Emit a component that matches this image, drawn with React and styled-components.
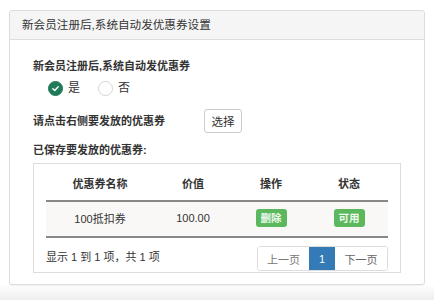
import React, { useState } from 'react';
import styled, { createGlobalStyle } from 'styled-components';

const GlobalStyle = createGlobalStyle`
  html, body {
    margin: 0;
    padding: 0;
  }
  body {
    min-height: 300px;
    background: linear-gradient(to bottom, #fff 0, #fff 284px, #efeeee 300px);
    font-family: 'Liberation Sans', 'Noto Sans CJK SC', sans-serif;
    color: #333;
  }
`;

const columns = [
  { key: 'name', title: '优惠券名称', width: 108 },
  { key: 'value', title: '价值', width: 78 },
  { key: 'action', title: '操作', width: 78 },
  { key: 'status', title: '状态', width: 78 },
];

const coupons = [{ id: 1, name: '100抵扣券', value: '100.00' }];

const Check = () => (
  <svg width="9" height="9" viewBox="0 0 10 10">
    <path d="M2 5.2 L4.2 7.2 L8 3" fill="none" stroke="#fff" strokeWidth="1.6" strokeLinecap="round" strokeLinejoin="round" />
  </svg>
);

function App() {
  const [send, setSend] = useState(true);

  return (
    <>
      <GlobalStyle />
      <Page>
        <Panel>
          <PanelHeader>新会员注册后,系统自动发优惠券设置</PanelHeader>
          <PanelBody>
            <Label>新会员注册后,系统自动发优惠券</Label>
            <RadioRow>
              <RadioOption onClick={() => setSend(true)}>
                <RadioDot $checked={send}>{send && <Check />}</RadioDot>
                是
              </RadioOption>
              <RadioOption onClick={() => setSend(false)}>
                <RadioDot $checked={!send}>{!send && <Check />}</RadioDot>
                否
              </RadioOption>
            </RadioRow>

            <SelectRow>
              <Label>请点击右侧要发放的优惠券</Label>
              <SelectButton>选择</SelectButton>
            </SelectRow>

            <SavedLabel>已保存要发放的优惠券:</SavedLabel>

            <TableBox>
              <Table>
                <colgroup>
                  {columns.map((c) => (
                    <col key={c.key} style={{ width: c.width }} />
                  ))}
                </colgroup>
                <thead>
                  <tr>
                    {columns.map((c) => (
                      <Th key={c.key}>{c.title}</Th>
                    ))}
                  </tr>
                </thead>
                <tbody>
                  {coupons.map((c) => (
                    <Tr key={c.id}>
                      <Td>{c.name}</Td>
                      <Td>{c.value}</Td>
                      <Td>
                        <Badge>删除</Badge>
                      </Td>
                      <Td>
                        <Badge>可用</Badge>
                      </Td>
                    </Tr>
                  ))}
                </tbody>
              </Table>

              <Footer>
                <Info>显示 1 到 1 项，共 1 项</Info>
                <Pager>
                  <PageItem $width={51} $disabled>上一页</PageItem>
                  <PageItem $width={26} $active>1</PageItem>
                  <PageItem $width={52}>下一页</PageItem>
                </Pager>
              </Footer>
            </TableBox>
          </PanelBody>
        </Panel>
      </Page>
    </>
  );
}

export default App;

// Styling
const Page = styled.div`
  padding: 10px 9px 0;
`;

const Panel = styled.div`
  width: 414px;
  border: 1px solid #ddd;
  border-radius: 3px;
  background: #fff;
  box-shadow: 0 1px 1px rgba(0, 0, 0, 0.05);
`;

const PanelHeader = styled.div`
  height: 28px;
  line-height: 28px;
  padding-left: 12px;
  background: #f5f5f5;
  border-bottom: 1px solid #ddd;
  border-radius: 3px 3px 0 0;
  font-size: 11.6px;
  color: #333;
`;

const PanelBody = styled.div`
  padding: 18px 23px 11px 23px;
`;

const Label = styled.div`
  font-size: 11px;
  font-weight: 700;
  line-height: 16px;
  color: #333;
`;

const RadioRow = styled.div`
  display: flex;
  align-items: center;
  gap: 18px;
  height: 16px;
  margin-top: 6px;
  padding-left: 15px;
`;

const RadioOption = styled.label`
  display: flex;
  align-items: center;
  gap: 5px;
  font-size: 12px;
  line-height: 16px;
  cursor: pointer;
`;

const RadioDot = styled.span`
  display: flex;
  align-items: center;
  justify-content: center;
  box-sizing: border-box;
  width: 15px;
  height: 15px;
  border-radius: 50%;
  background: ${(p) => (p.$checked ? '#1f7a57' : '#fff')};
  border: 1px solid ${(p) => (p.$checked ? '#1f7a57' : '#d5d5d5')};
`;

const SelectRow = styled.div`
  display: flex;
  align-items: center;
  gap: 39px;
  margin-top: 13px;
`;

const SelectButton = styled.button`
  box-sizing: border-box;
  width: 38px;
  height: 24px;
  padding: 0;
  border: 1px solid #ccc;
  border-radius: 3px;
  background: #fff;
  font-family: inherit;
  font-size: 11.5px;
  color: #333;
`;

const SavedLabel = styled(Label)`
  margin-top: 9px;
`;

const TableBox = styled.div`
  margin-top: 5px;
  border: 1px solid #ddd;
  padding: 0 12px 1px;
`;

const Table = styled.table`
  width: 342px;
  border-collapse: collapse;
  table-layout: fixed;
`;

const Th = styled.th`
  height: 34px;
  padding: 2px 0 0;
  font-size: 11px;
  font-weight: 700;
  text-align: center;
  border-bottom: 2px solid #888;
`;

const Tr = styled.tr`
  background: #f9f8f7;
`;

const Td = styled.td`
  height: 32px;
  padding: 0 0 2px;
  font-size: 11px;
  text-align: center;
  border-bottom: 2px solid #888;
`;

const Badge = styled.span`
  display: inline-block;
  width: 31px;
  height: 18px;
  line-height: 18px;
  border-radius: 3px;
  background: #5cb85c;
  color: #eef8ee;
  font-size: 10.5px;
  font-weight: 700;
  vertical-align: middle;
`;

const Footer = styled.div`
  display: flex;
  justify-content: space-between;
  align-items: center;
  margin-top: 8px;
`;

const Info = styled.div`
  font-size: 11px;
  color: #333;
  padding-bottom: 6px;
`;

const Pager = styled.div`
  display: flex;
  height: 25px;
  border: 1px solid #ddd;
  border-radius: 3px;
  box-sizing: border-box;
  overflow: hidden;
`;

const PageItem = styled.span`
  display: flex;
  align-items: center;
  justify-content: center;
  width: ${(p) => p.$width}px;
  font-size: 11px;
  color: ${(p) => (p.$active ? '#fff' : p.$disabled ? '#777' : '#666')};
  background: ${(p) => (p.$active ? '#337ab7' : '#fff')};
`;
